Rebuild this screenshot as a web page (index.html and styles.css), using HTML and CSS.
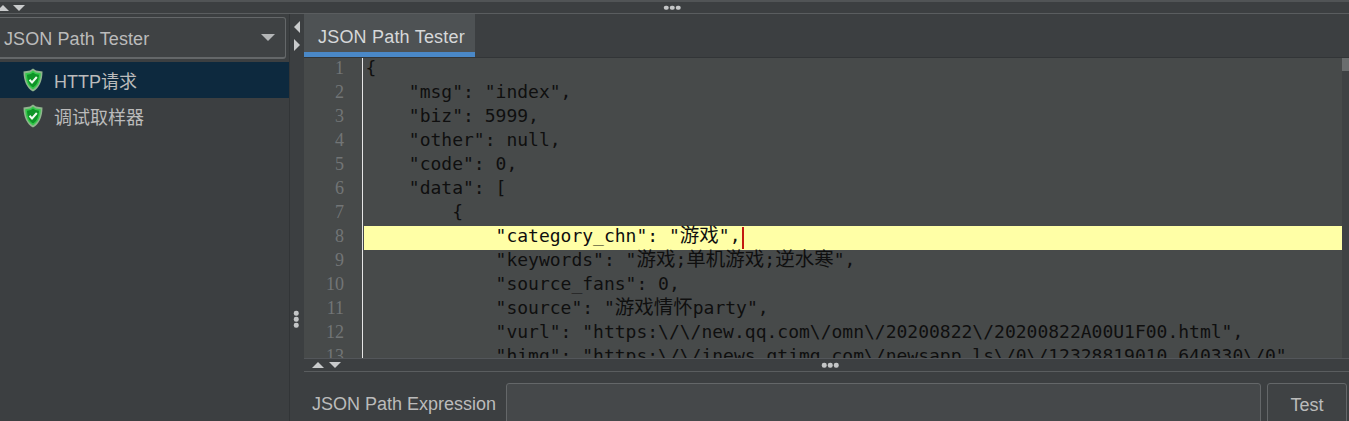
FILE: index.html
```html
<!DOCTYPE html>
<html lang="zh">
<head>
<meta charset="utf-8">
<title>JSON Path Tester</title>
<link rel="stylesheet" href="styles.css">
</head>
<body>
<div class="app">
  <div class="hsplit top-split">
    <div class="arrows clip-left"><span class="tri up"></span><span class="tri down"></span></div>
    <div class="dots"><i></i><i></i><i></i></div>
  </div>
  <div class="main">
    <aside class="left">
      <div class="combo"><span>JSON Path Tester</span><span class="tri down big"></span></div>
      <div class="tree-row selected">
        <svg class="shield" viewBox="0 0 20 24"><path d="M10 0.500 L13 2.500 L19.500 3.500 C19.500 13 16 20.500 10 23.500 C4 20.500 0.500 13 0.500 3.500 L7 2.500 Z" fill="#8fb58d"/><path d="M10 2.500 L12.800 4.500 L17.800 5.300 C17.500 13 15 18.800 10 21.500 C5 18.800 2.500 13 2.200 5.300 L7.200 4.500 Z" fill="#35c94c"/><path d="M10 4.500 L12.300 6 L16 6.800 C15.700 13 13.800 17.500 10 19.500 C6.200 17.500 4.300 13 4 6.800 L7.700 6 Z" fill="#0e9427"/><path d="M6.500 11.800 L9 14.500 L13.800 9" fill="none" stroke="#f0fbf0" stroke-width="2"/></svg>
        <span class="label">HTTP请求</span>
      </div>
      <div class="tree-row">
        <svg class="shield" viewBox="0 0 20 24"><path d="M10 0.500 L13 2.500 L19.500 3.500 C19.500 13 16 20.500 10 23.500 C4 20.500 0.500 13 0.500 3.500 L7 2.500 Z" fill="#8fb58d"/><path d="M10 2.500 L12.800 4.500 L17.800 5.300 C17.500 13 15 18.800 10 21.500 C5 18.800 2.500 13 2.200 5.300 L7.200 4.500 Z" fill="#35c94c"/><path d="M10 4.500 L12.300 6 L16 6.800 C15.700 13 13.800 17.500 10 19.500 C6.200 17.500 4.300 13 4 6.800 L7.700 6 Z" fill="#0e9427"/><path d="M6.500 11.800 L9 14.500 L13.800 9" fill="none" stroke="#f0fbf0" stroke-width="2"/></svg>
        <span class="label">调试取样器</span>
      </div>
    </aside>
    <div class="vsplit">
      <div class="v-arrows"><span class="tri left-tri"></span><span class="tri right-tri"></span></div>
      <div class="dots vertical"><i></i><i></i><i></i></div>
    </div>
    <section class="right">
      <div class="tabbar"><div class="tab">JSON Path Tester</div></div>
      <div class="editor">
        <div class="gutter">
          <div>1</div><div>2</div><div>3</div><div>4</div><div>5</div><div>6</div><div>7</div><div>8</div><div>9</div><div>10</div><div>11</div><div>12</div><div>13</div>
        </div>
        <div class="code">
          <div class="line">{</div>
          <div class="line">    "msg": "index",</div>
          <div class="line">    "biz": 5999,</div>
          <div class="line">    "other": null,</div>
          <div class="line">    "code": 0,</div>
          <div class="line">    "data": [</div>
          <div class="line">        {</div>
          <div class="line current"><span>            "category_chn": "<span class="cjk">游戏</span>",</span><span class="caret"></span></div>
          <div class="line">            "keywords": "<span class="cjk">游戏</span>;<span class="cjk">单机游戏</span>;<span class="cjk">逆水寒</span>",</div>
          <div class="line">            "source_fans": 0,</div>
          <div class="line">            "source": "<span class="cjk">游戏情怀</span>party",</div>
          <div class="line">            "vurl": "https:\/\/new.qq.com\/omn\/20200822\/20200822A00U1F00.html",</div>
          <div class="line">            "himg": "https:\/\/inews.gtimg.com\/newsapp_ls\/0\/12328819010_640330\/0"</div>
        </div>
        <div class="scrollbar"><div class="thumb"></div></div>
      </div>
      <div class="hsplit mid-split">
        <div class="arrows"><span class="tri up"></span><span class="tri down"></span></div>
        <div class="dots"><i></i><i></i><i></i></div>
      </div>
      <div class="expr">
        <span class="expr-label">JSON Path Expression</span>
        <div class="input"></div>
        <div class="button">Test</div>
      </div>
    </section>
  </div>
</div>
</body>
</html>
```
FILE: styles.css
```css
* { box-sizing: border-box; }
html, body { margin: 0; height: 100%; overflow: hidden; background: #3c3f41; }
.app {
  width: 1349px; height: 421px; display: flex; flex-direction: column;
  font-family: "Liberation Sans", Arial, sans-serif; color: #bbbbbb; overflow: hidden;
}
.hsplit { position: relative; display: flex; align-items: center; flex: none; }
.top-split {
  height: 14px; background: #3c3f41; border-top: 2px solid #515456;
  border-bottom: 1px solid #5a5d5f;
}
.arrows { display: flex; gap: 5px; align-items: center; position: absolute; left: 8px; top: 50%; transform: translateY(-50%); }
.clip-left { left: -3px; gap: 4px; }
.tri { display: block; width: 0; height: 0; flex: none; }
.up { border-left: 6px solid transparent; border-right: 6px solid transparent; border-bottom: 6px solid #c9cbcc; }
.down { border-left: 6px solid transparent; border-right: 6px solid transparent; border-top: 6px solid #c9cbcc; }
.down.big { border-left-width: 7px; border-right-width: 7px; border-top: 7px solid #b4b6b7; margin-top: -5px; }
.dots { position: absolute; left: 50%; top: 50%; transform: translate(-50%, -50%); display: flex; gap: 1.500px; }
.top-split .dots { left: 672px; }
.mid-split .dots { left: 526px; }
.dots i { width: 4.500px; height: 4.500px; border-radius: 50%; background: #c4c6c7; display: block; }
.dots.vertical { flex-direction: column; top: 305px; left: 6px; }
.main { flex: 1; display: flex; min-height: 0; }
.left { width: 289px; flex: none; background: #3c3f41; padding-top: 3px; }
.combo {
  margin: 0 3px 0 -4px; height: 42px; border: 1px solid #646769; border-bottom-width: 2px; border-radius: 3px;
  background: #3f4244; display: flex; align-items: center; justify-content: space-between;
  padding: 4px 10px 0 7px; font-size: 18px; color: #bbbbbb; letter-spacing: .1px;
}
.tree-row { height: 36px; display: flex; align-items: center; padding-left: 23px; gap: 11px; font-size: 18px; font-family: "Liberation Sans", "Noto Sans CJK SC", sans-serif; }
.combo + .tree-row { margin-top: 3px; }
.tree-row.selected { background: #0d293e; color: #bbbbbb; }
.shield { width: 20px; height: 24px; flex: none; }
.vsplit { width: 15px; flex: none; position: relative; background: #3c3f41; border-left: 1px solid #323537; }
.v-arrows { display: flex; flex-direction: column; gap: 6px; padding: 7px 0 0 4px; }
.left-tri { border-top: 6px solid transparent; border-bottom: 6px solid transparent; border-right: 6px solid #c9cbcc; }
.right-tri { border-top: 6px solid transparent; border-bottom: 6px solid transparent; border-left: 6px solid #c9cbcc; }
.right { flex: 1; min-width: 0; display: flex; flex-direction: column; }
.tabbar { height: 44px; flex: none; background: #3c3f41; display: flex; border-bottom: 1px solid #323537; }
.tab {
  width: 171px; background: #4e5254; border-bottom: 5px solid #4a88c7; font-size: 18px; color: #d6d8d9;
  padding: 13px 0 0 14px; letter-spacing: .2px;
}
.editor { height: 300px; flex: none; display: flex; background: #474a4a; overflow: hidden; }
.gutter {
  width: 59px; flex: none; border-right: 1px solid #e6e6e6; height: 302px; margin-top: -2px;
  font: 18px/24px "Liberation Serif", serif; color: #727576; text-align: right; padding-right: 18px;
}
.code { flex: 1; min-width: 0; padding-left: 1px; font: 18px/19px "DejaVu Sans Mono", monospace; color: #0f0f0f; }
.line { height: 24px; white-space: pre; padding-left: 1.500px; }
.line.current { background: #ffffa6; display: flex; line-height: 20px; }
.cjk { font-family: "Noto Sans CJK SC", sans-serif; font-size: 19.500px; line-height: 0; }
.caret { width: 2px; height: 22px; background: #c2190f; margin: 1px 0 0 2px; display: block; }
.scrollbar { width: 7px; flex: none; background: #3f4244; }
.thumb { height: 13px; background: #6a6d6e; }
.mid-split { height: 14px; background: #3c3f41; border-top: 1px solid #53565a; border-bottom: 1px solid #5a5d5f; }
.expr { flex: 1; min-height: 0; display: flex; align-items: flex-start; background: #3c3f41; padding: 11px 0 0 8px; }
.expr-label { width: 194px; flex: none; font-size: 18px; padding-top: 11px; color: #bbbbbb; white-space: nowrap; }
.input { width: 755px; height: 50px; flex: none; border: 1px solid #646769; border-radius: 3px; background: #45484a; }
.button {
  width: 80px; height: 50px; flex: none; margin-left: 6px; border: 1px solid #646769; border-radius: 3px;
  background: #3f4244; font-size: 18px; text-align: center; padding-top: 11px;
}
```
